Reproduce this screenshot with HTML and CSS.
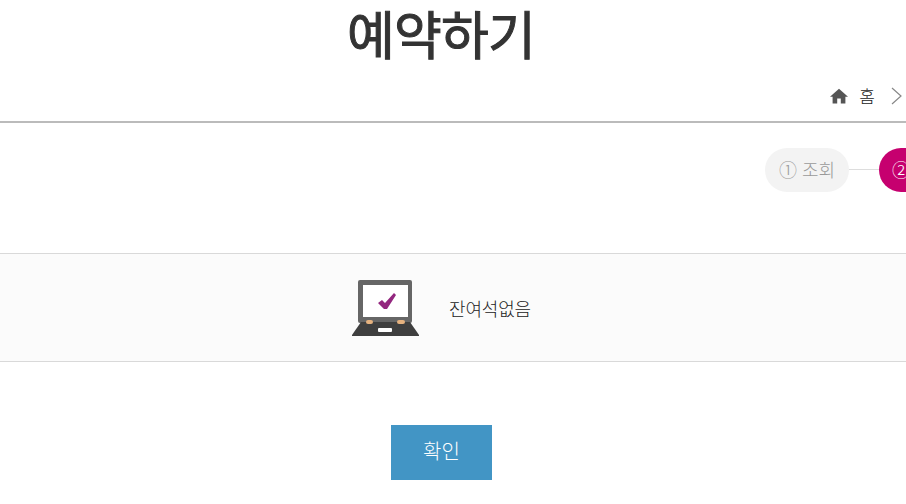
FILE: index.html
```html
<!DOCTYPE html>
<html lang="ko">
<head>
<meta charset="utf-8">
<title>예약하기</title>
<link rel="stylesheet" href="styles.css">
</head>
<body>
<h1 class="title">예약하기</h1>
<nav class="crumbs">
  <svg class="home" viewBox="0 0 18 16" width="18" height="16"><path d="M9 .8 0 8.800h2.600V15.500h4.600V10.400h3.600v5.100h4.600V8.800H18Z" fill="#555"/></svg>
  <span class="crumb">홈</span>
  <svg class="chev" viewBox="0 0 12 18" width="12" height="18"><path d="M1 1l9 8-9 8" fill="none" stroke="#888" stroke-width="1.2"/></svg>
</nav>
<div class="steps">
  <div class="step">① 조회</div>
  <div class="link"></div>
  <div class="step step-on">② 선택</div>
</div>
<section class="notice">
  <svg class="laptop" viewBox="0 0 67 56" width="67" height="56">
    <rect x="6" y="0" width="54" height="43" rx="2" fill="#666"/>
    <rect x="11" y="5" width="45" height="32" fill="#fff"/>
    <path d="M26 23l4-3 3 3 9-10 2 2-9 14h-3Z" fill="#93277f"/>
    <path d="M9 42h49l9 13v1H0v-1Z" fill="#3f3f3f"/>
    <rect x="14" y="40" width="7" height="4" rx="2" fill="#e6b27f"/>
    <rect x="45" y="40" width="8" height="4" rx="2" fill="#e6b27f"/>
    <rect x="26" y="48" width="14" height="4" rx="1" fill="#fff"/>
  </svg>
  <p class="msg">잔여석없음</p>
</section>
<div class="actions"><button class="confirm" type="button">확인</button></div>
</body>
</html>
```
FILE: styles.css
```css
html, body { margin: 0; padding: 0; }
body {
  width: 906px;
  height: 504px;
  overflow: hidden;
  background: #fff;
  color: #333;
  font-family: "Noto Sans CJK KR", "Noto Sans", sans-serif;
}
.title {
  margin: 0;
  height: 70px;
  padding-right: 24px;
  line-height: 66px;
  text-align: center;
  font-size: 52px;
  font-weight: 400;
  letter-spacing: -0.8px;
  color: #333;
  -webkit-text-stroke: 1px #333;
}
.crumbs {
  height: 51px;
  border-bottom: 2px solid #bbb;
  display: flex;
  align-items: center;
  justify-content: flex-end;
  padding-right: 3px;
}
.home { margin-right: 11px; }
.crumb { font-size: 17px; font-weight: 300; color: #222; margin-right: 16px; line-height: 49px; }
.steps {
  height: 130px;
  padding: 25px 0 0 765px;
  box-sizing: border-box;
  display: flex;
  align-items: flex-start;
  overflow: hidden;
}
.step {
  width: 84px;
  height: 44px;
  border-radius: 22px;
  background: #f3f3f3;
  color: #999;
  font-size: 18px;
  font-weight: 300;
  line-height: 43px;
  text-align: center;
  flex: none;
}
.link { width: 30px; height: 1px; background: #ddd; margin-top: 21px; flex: none; }
.step-on {
  background: #c6006f;
  color: #fff;
  width: 117px;
  padding-left: 13px;
  box-sizing: border-box;
  text-align: left;
}
.notice {
  height: 109px;
  box-sizing: border-box;
  border-top: 1px solid #d9d9d9;
  border-bottom: 1px solid #d9d9d9;
  background: #fbfbfb;
  display: flex;
  align-items: center;
  justify-content: center;
  gap: 30px;
  padding-right: 23px;
}
.msg { margin: 0; font-size: 18px; font-weight: 300; color: #222; letter-spacing: -0.2px; }
.actions { display: flex; justify-content: center; padding: 63px 23px 0 0; }
.confirm {
  width: 101px;
  height: 55px;
  border: 0;
  background: #4295c5;
  color: #fff;
  font-family: inherit;
  font-size: 20px;
  font-weight: 300;
  line-height: 50px;
  padding: 0 0 3px;
}
```
